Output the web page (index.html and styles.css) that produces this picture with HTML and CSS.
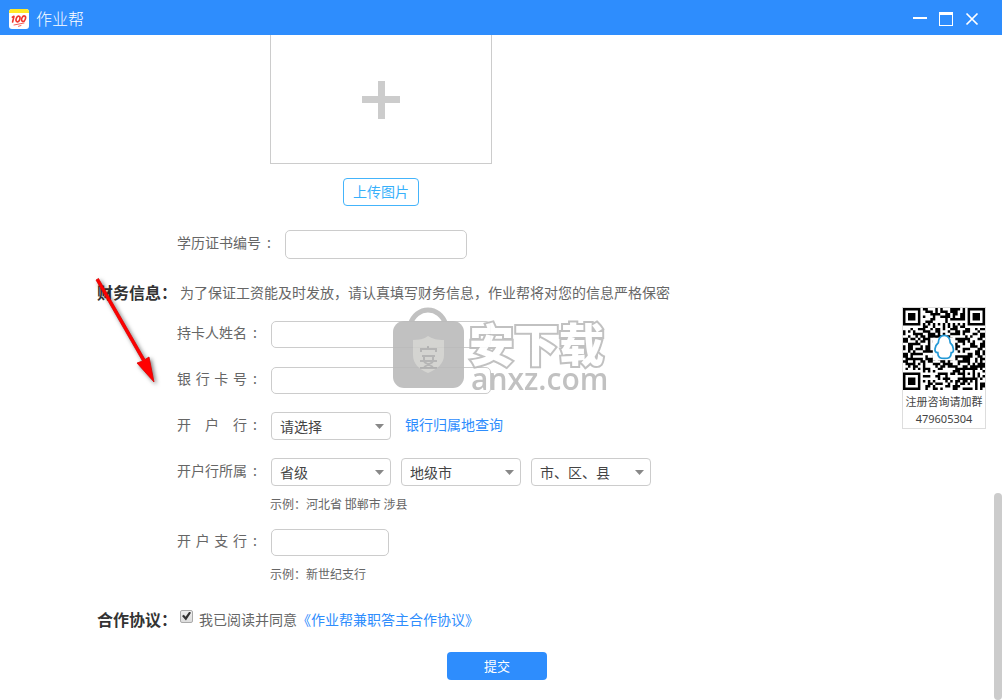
FILE: index.html
```html
<!DOCTYPE html>
<html lang="zh-CN">
<head>
<meta charset="utf-8">
<title>作业帮</title>
<link rel="stylesheet" href="styles.css">
</head>
<body>
<div class="window">
  <header class="titlebar">
    <svg class="logo" viewBox="0 0 20 20" aria-hidden="true">
      <rect width="20" height="20" rx="3" fill="#fff"/>
      <path d="M0 4V3a3 3 0 0 1 3-3h14a3 3 0 0 1 3 3v1z" fill="#ffe928"/>
      <g fill="none" stroke="#f0362f" stroke-width="1.6" stroke-linecap="round" stroke-linejoin="round">
        <path d="M3.300 8.200L5 7.300L3.600 13"/>
        <ellipse cx="9" cy="10" rx="1.800" ry="2.900" transform="rotate(20 9 10)"/>
        <ellipse cx="14.600" cy="9.700" rx="1.800" ry="2.900" transform="rotate(20 14.600 9.700)"/>
        <path d="M5 16L15 14M9.500 17.300L12 16.500" stroke-width="0.8"/>
      </g>
    </svg>
    <h1 class="app-name">作业帮</h1>
    <div class="window-controls">
      <button class="window-button" type="button" aria-label="最小化"><svg viewBox="0 0 14 14"><path d="M0 5h14v2H0z" fill="#fff"/></svg></button>
      <button class="window-button" type="button" aria-label="最大化"><svg viewBox="0 0 14 14"><path fill-rule="evenodd" d="M0 0h14v14H0zM1 3v10h12V3z" fill="#fff"/></svg></button>
      <button class="window-button" type="button" aria-label="关闭"><svg viewBox="0 0 14 14"><path d="M1.500 1.500l11 11M12.500 1.500l-11 11" stroke="#fff" stroke-width="1.7"/></svg></button>
    </div>
  </header>

  <main class="content">
    <form class="form">
      <div class="upload">
        <div class="upload-box">
          <svg class="plus" viewBox="0 0 38 38" aria-hidden="true"><path d="M16 0h7v15h15v7H23v16h-7V22H0v-7h16z" fill="#ccc"/></svg>
        </div>
        <button class="upload-button" type="button">上传图片</button>
      </div>

      <div class="row certificate">
        <label class="label" for="cert"><span class="name name-long">学历证书编号</span><span>:</span></label>
        <input class="field cert-field" id="cert" type="text">
      </div>

      <div class="section-head">
        <h2 class="section-title">财务信息：</h2>
        <p class="section-note">为了保证工资能及时发放，请认真填写财务信息，作业帮将对您的信息严格保密</p>
      </div>

      <div class="rows">
        <div class="row">
          <label class="label" for="holder"><span class="name">持卡人姓名</span><span>:</span></label>
          <input class="field wide" id="holder" type="text">
        </div>
        <div class="row">
          <label class="label" for="card"><span class="name">银行卡号</span><span>:</span></label>
          <input class="field wide" id="card" type="text">
        </div>
        <div class="row">
          <label class="label" for="bank"><span class="name">开户行</span><span>:</span></label>
          <select class="select" id="bank"><option>请选择</option></select>
          <a class="link lookup" href="#">银行归属地查询</a>
        </div>
        <div class="row">
          <label class="label" for="province"><span class="name">开户行所属</span><span>:</span></label>
          <div class="region">
            <select class="select" id="province"><option>省级</option></select>
            <select class="select" aria-label="地级市"><option>地级市</option></select>
            <select class="select" aria-label="市、区、县"><option>市、区、县</option></select>
          </div>
        </div>
      </div>
      <p class="hint">示例：河北省 邯郸市 涉县</p>
      <div class="row branch">
        <label class="label" for="branch"><span class="name">开户支行</span><span>:</span></label>
        <input class="field branch-field" id="branch" type="text">
      </div>
      <p class="hint">示例：新世纪支行</p>

      <div class="section-head agreement">
        <h2 class="section-title">合作协议：</h2>
        <div class="agree">
          <input class="check" id="agree" type="checkbox" checked>
          <p class="agree-text"><label for="agree">我已阅读并同意</label><a class="link" href="#">《作业帮兼职答主合作协议》</a></p>
        </div>
      </div>
      <button class="submit" type="submit">提交</button>
    </form>

    <div class="watermark">
      <svg class="bag" viewBox="0 0 77 84" aria-hidden="true">
        <path d="M20 18C26-2 50-2 56 18" fill="none" stroke="#bbb" stroke-width="5"/>
        <rect x="3" y="14" width="71" height="67" rx="11" fill="#bbb"/>
        <path d="M38 29c5 3 9 4 16 4v15c0 9-7 14-16 18-9-4-15-9-15-18V33c6 0 11-1 15-4z" fill="#d0d0cd"/>
        <path d="M38 39v3M31 45v-3h15v3M32 49h13M34 49v6M43 49v6M30 54h17M34 55l9 5M43 55l-9 5M30 61h17" fill="none" stroke="#adadad" stroke-width="2"/>
      </svg>
      <div class="brand">
        <p class="brand-name">安下载</p>
        <p class="brand-site">anxz.com</p>
      </div>
    </div>

    <svg class="arrow" viewBox="0 0 70 116" aria-hidden="true">
      <path d="M4 4L6.500 2.500L53 83.500L57 81L62 106L45 87L50.500 85z" fill="#f00" stroke="#d00" stroke-width="0.8"/>
    </svg>

    <aside class="group-card">
      <svg class="qr" viewBox="0 0 33 33" role="img" aria-label="QQ群二维码">
        <path id="qr-modules" fill="#000"/>
        <rect x="12" y="12" width="9" height="9" fill="#fff"/>
        <path d="M14 18c-2 0-1-3 .2-4 .2-4 4.600-4 4.800 0 1.200 1 2 4 .4 4 0 2-1 2.300-2.700 2.300S14 20 14 18z" fill="#fff" stroke="#2499d6" stroke-width=".7"/>
      </svg>
      <p class="group-title">注册咨询请加群</p>
      <p class="group-number">479605304</p>
    </aside>
    <div class="scroll-thumb"></div>
  </main>
</div>
<script src="qr.js"></script>
</body>
</html>
```

FILE: styles.css
```css
* { box-sizing: border-box; }

body {
  margin: 0;
  background: #fff;
  color: #666;
  font: 14px/20px "Noto Sans CJK SC", sans-serif;
}

h1, h2, p { margin: 0; }
button, input, select { font: inherit; margin: 0; }

.window {
  display: flex;
  flex-direction: column;
  height: 100vh;
  overflow: hidden;
}

.titlebar {
  display: flex;
  align-items: center;
  gap: 7px;
  flex: none;
  height: 35px;
  padding: 2px 23px 0 9px;
  background: #2e8dfd;
  color: #fff;
}
.logo { width: 20px; height: 20px; }
.app-name { padding-bottom: 2px; font-size: 16px; font-weight: 300; }
.window-controls { display: flex; gap: 12px; margin-left: auto; }
.window-button {
  width: 14px;
  height: 14px;
  padding: 0;
  border: 0;
  background: none;
}
.window-button svg { display: block; width: 14px; height: 14px; }

.content { position: relative; flex: 1; min-height: 0; }
.form { padding: 0 97px; }

.upload {
  display: flex;
  flex-direction: column;
  align-items: center;
  gap: 14px;
  width: 222px;
  margin-left: 173px;
}
.upload-box {
  display: flex;
  justify-content: center;
  align-self: stretch;
  height: 129px;
  padding-top: 46px;
  border: 1px solid #ccc;
  border-top: 0;
}
.plus { width: 38px; height: 38px; }
.upload-button {
  height: 28px;
  padding: 0 9px 2px;
  border: 1px solid #44b4fb;
  border-radius: 4px;
  background: #fff;
  color: #37b0fb;
  line-height: 24px;
}

.row { display: flex; align-items: center; padding-left: 80px; }
.label {
  display: flex;
  width: 94px;
  padding-bottom: 4px;
}
.name {
  width: 70px;
  margin-right: 6px;
  text-align: justify;
  text-align-last: justify;
}
.name-long { width: 84px; }
.certificate { margin-top: 24px; }
.certificate .label { width: 108px; padding-bottom: 6px; }

.field {
  height: 27px;
  margin-top: 1px;
  padding: 0 8px;
  border: 1px solid #ccc;
  border-radius: 5px;
  background: #fff;
}
.wide { width: 220px; }
.cert-field { width: 182px; height: 29px; margin-top: 0; }
.branch-field { width: 118px; }

.select {
  width: 120px;
  height: 28px;
  padding: 0 20px 0 8px;
  border: 1px solid #ccc;
  border-radius: 4px;
  appearance: none;
  background: url("data:image/svg+xml,%3Csvg xmlns='http://www.w3.org/2000/svg' width='9' height='5'%3E%3Cpath d='M0 0h9L4.500 5z' fill='%23888'/%3E%3C/svg%3E") no-repeat right 6px top 11px #fff;
  color: #444;
}
.region { display: flex; gap: 10px; }
.link { color: #2e8dfd; text-decoration: none; }
.lookup { margin-left: 14px; padding-bottom: 4px; }

.section-head { display: flex; align-items: center; margin-top: 21px; }
.section-title {
  width: 83px;
  color: #333;
  font-size: 16px;
  line-height: 24px;
  font-weight: 700;
}
.rows { display: grid; gap: 18px; margin-top: 16px; }
.hint { margin: 8px 0 0 173px; font-size: 12px; }
.branch { margin-top: 14px; }

.agreement { margin-top: 23px; }
.agree { display: flex; align-items: center; gap: 6px; }
.check {
  display: grid;
  place-items: center;
  width: 13px;
  height: 13px;
  margin-bottom: 6px;
  border: 1px solid #aaa;
  border-radius: 2px;
  appearance: none;
  background: linear-gradient(#eee, #ddd);
}
.check:checked::before {
  content: "";
  width: 9px;
  height: 9px;
  background: #333;
  clip-path: polygon(0 50%, 20% 35%, 40% 58%, 82% 0, 100% 14%, 44% 100%);
}

.submit {
  display: block;
  width: 100px;
  height: 28px;
  margin: 21px 0 0 350px;
  padding: 0;
  border: 0;
  border-radius: 4px;
  background: #2e8dfd;
  color: #fff;
  font-size: 13px;
  line-height: 28px;
}

.watermark {
  position: absolute;
  left: 390px;
  top: 272px;
  display: flex;
  align-items: flex-start;
  opacity: 0.9;
  pointer-events: none;
}
.bag { width: 77px; height: 84px; }
.brand { padding: 14px 0 0 2px; color: #bbb; white-space: nowrap; }
.brand-name {
  color: #fff;
  font-size: 45px;
  font-weight: 900;
  line-height: 44px;
  -webkit-text-stroke: 4px #bbb;
  paint-order: stroke fill;
}
.brand-site {
  padding-left: 2px;
  font: 600 30px/28px "Open Sans", sans-serif;
}

.arrow {
  position: absolute;
  left: 92px;
  top: 241px;
  width: 70px;
  height: 116px;
  filter: drop-shadow(2px 2px 2px #0008);
  pointer-events: none;
}

.group-card {
  position: absolute;
  top: 272px;
  right: 16px;
  width: 84px;
  height: 122px;
  border: 1px solid #ddd;
  background: #fff;
  color: #444;
  font-size: 11px;
  line-height: 18px;
  text-align: center;
  white-space: nowrap;
}
.qr { display: block; width: 82px; height: 82px; margin-bottom: 2px; }
.group-number { font-family: "Noto Sans", sans-serif; }

.scroll-thumb {
  position: absolute;
  right: 0;
  bottom: 0;
  width: 8px;
  height: 207px;
  border-radius: 4px;
  background: #ccc;
}
```

FILE: qr.js
```js
const size = 33;
let seed = 479605304;

function nextBit() {
  seed = (Math.imul(seed, 1664525) + 1013904223) >>> 0;
  return (seed >>> 16) & 1;
}

function finder(x, y) {
  if (x < -1 || y < -1 || x > 7 || y > 7) return null;
  const ring = Math.max(Math.abs(x - 3), Math.abs(y - 3));
  return ring === 3 || ring < 2;
}

let path = "";
for (let y = 0; y < size; y++) {
  for (let x = 0; x < size; x++) {
    const fixed = finder(x, y) ?? finder(x - 26, y) ?? finder(x, y - 26);
    const timing = x === 6 || y === 6 ? (x + y) % 2 === 0 : null;
    const ring = Math.max(Math.abs(x - 26), Math.abs(y - 26));
    const align = ring < 3 ? ring !== 1 : null;
    if (fixed ?? align ?? timing ?? nextBit()) path += `M${x} ${y}h1v1h-1z`;
  }
}
document.getElementById("qr-modules").setAttribute("d", path);
```
